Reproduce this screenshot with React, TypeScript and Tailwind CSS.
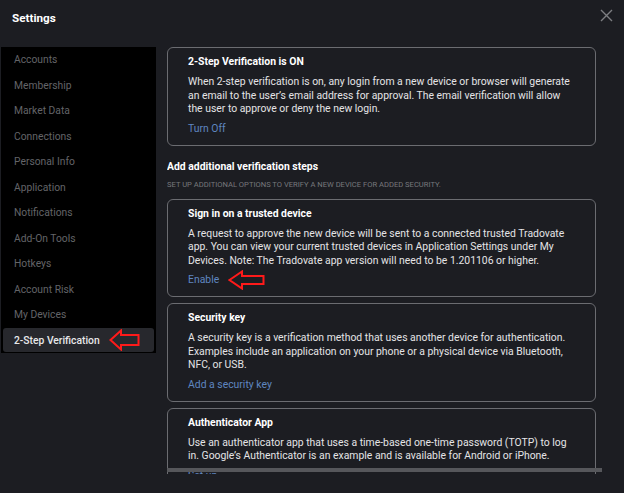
import React from "react";

const navItems = [
  "Accounts",
  "Membership",
  "Market Data",
  "Connections",
  "Personal Info",
  "Application",
  "Notifications",
  "Add-On Tools",
  "Hotkeys",
  "Account Risk",
  "My Devices",
  "2-Step Verification",
];

function RedArrow({ w, h }: { w: number; h: number }) {
  const hx = Math.round(w * 0.38);
  const t1 = Math.round(h * 0.28);
  const t2 = h - t1;
  return (
    <svg width={w} height={h} viewBox={`0 0 ${w} ${h}`} className="block">
      <polygon
        points={`1.5,${h / 2} ${hx},1.5 ${hx},${t1} ${w - 1.5},${t1} ${w - 1.5},${t2} ${hx},${t2} ${hx},${h - 1.5}`}
        fill="none"
        stroke="#ff1a1a"
        strokeWidth="2"
        strokeLinejoin="miter"
      />
    </svg>
  );
}

function Card({
  title,
  body,
  link,
  arrow,
}: {
  title: string;
  body: string;
  link: string;
  arrow?: boolean;
}) {
  return (
    <div className="w-[429px] shrink-0 rounded-[6px] border border-[#6b6c71] pl-[20px] pr-[22px] pt-[7px] pb-[9px]">
      <div className="text-[10.4px] leading-[14px] font-bold text-white">{title}</div>
      <div className="mt-[6px] text-[10.4px] leading-[13.5px] text-[#e4e4e6]">{body}</div>
      <div className="mt-[6px] flex items-center h-[14px]">
        <span className="text-[10.4px] leading-[14px] text-[#5f86c0]">{link}</span>
        {arrow && (
          <span className="ml-[9px]">
            <RedArrow w={37} h={20} />
          </span>
        )}
      </div>
    </div>
  );
}

export default function App() {
  return (
    <div
      className="relative w-[624px] h-[493px] overflow-hidden bg-[#1c1d22]"
      style={{ fontFamily: "Roboto, 'Liberation Sans', sans-serif" }}
    >
      {/* Header */}
      <div className="h-[47px] flex items-start">
        <div className="pl-[12px] pt-[10px] text-[11.7px] leading-[16px] font-bold text-white">
          Settings
        </div>
        <div className="ml-auto mr-[11px] mt-[9px]">
          <svg width="13" height="13" viewBox="0 0 13 13">
            <path d="M1 1L12 12M12 1L1 12" stroke="#7d7e82" strokeWidth="1.4" />
          </svg>
        </div>
      </div>

      <div className="flex items-start">
        {/* Sidebar */}
        <div className="ml-[1px] w-[155px] bg-black flex flex-col">
          {navItems.map((item) => {
            const active = item === "2-Step Verification";
            return (
              <div key={item} className="h-[25.5px] px-[2px] flex items-center">
                <div
                  className={
                    active
                      ? "w-full h-[24px] rounded-[3px] bg-[#27282d] pl-[11px] flex items-center"
                      : "w-full h-[24px] pl-[11px] flex items-center"
                  }
                >
                  <span
                    className={
                      active
                        ? "text-[10.3px] text-[#e8e8ea] font-medium"
                        : "text-[10.3px] text-[#636468]"
                    }
                  >
                    {item}
                  </span>
                  {active && (
                    <span className="ml-[9px]">
                      <RedArrow w={31} h={22} />
                    </span>
                  )}
                </div>
              </div>
            );
          })}
        </div>

        {/* Content */}
        <div className="relative ml-[11px] w-[435px] h-[427px] overflow-hidden">
          <div className="flex flex-col">
            <Card
              title="2-Step Verification is ON"
              body="When 2-step verification is on, any login from a new device or browser will generate an email to the user’s email address for approval. The email verification will allow the user to approve or deny the new login."
              link="Turn Off"
            />
            <div className="mt-[14px] text-[10.4px] leading-[14px] font-bold text-white">
              Add additional verification steps
            </div>
            <div className="mt-[6px] text-[7.6px] leading-[10px] uppercase text-[#77787c]">
              Set up additional options to verify a new device for added security.
            </div>
            <div className="mt-[9px] flex flex-col gap-[6px]">
              <Card
                title="Sign in on a trusted device"
                body="A request to approve the new device will be sent to a connected trusted Tradovate app. You can view your current trusted devices in Application Settings under My Devices. Note: The Tradovate app version will need to be 1.201106 or higher."
                link="Enable"
                arrow
              />
              <Card
                title="Security key"
                body="A security key is a verification method that uses another device for authentication. Examples include an application on your phone or a physical device via Bluetooth, NFC, or USB."
                link="Add a security key"
              />
              <Card
                title="Authenticator App"
                body="Use an authenticator app that uses a time-based one-time password (TOTP) to log in. Google’s Authenticator is an example and is available for Android or iPhone."
                link="Set up"
              />
            </div>
          </div>
          {/* horizontal scrollbar */}
          <div className="absolute left-0 right-0 top-[421px] h-[4px] bg-[#56575b]" />
        </div>
      </div>
    </div>
  );
}
